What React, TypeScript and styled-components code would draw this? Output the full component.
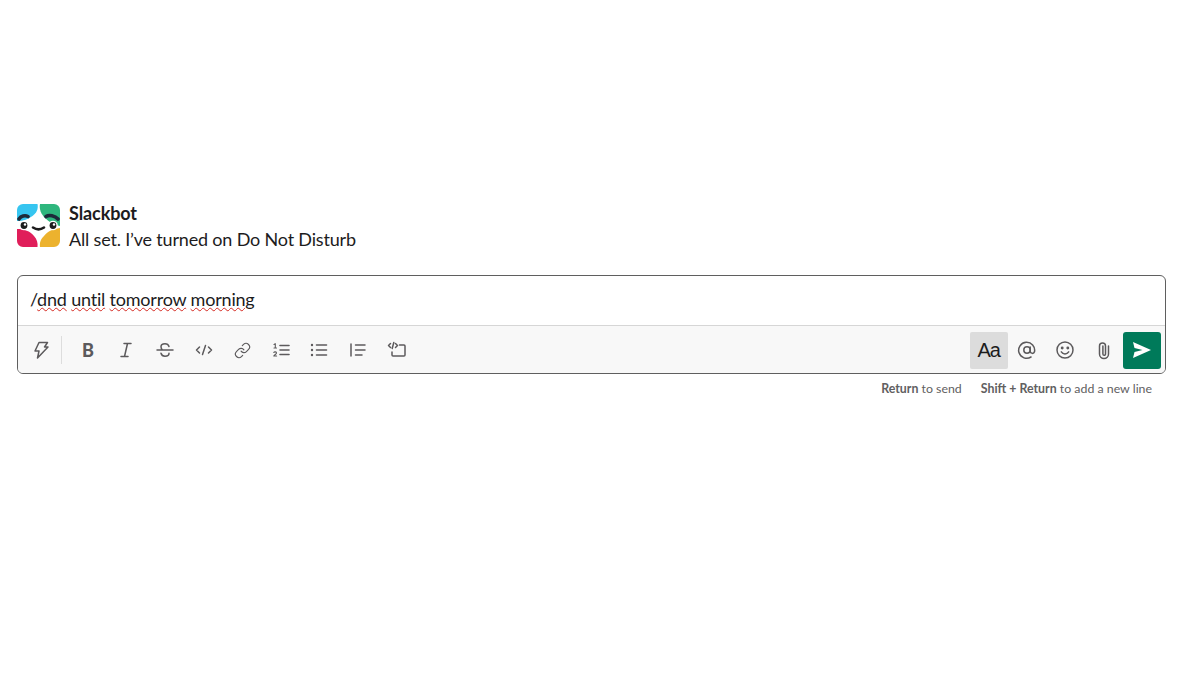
import styled, { createGlobalStyle } from 'styled-components'
import { Link } from 'lucide-react'

const GlobalStyle = createGlobalStyle`
  html, body {
    margin: 0;
    padding: 0;
    background: #fff;
    font-family: Lato, "Liberation Sans", sans-serif;
    color: #1d1c1d;
  }
`

const Page = styled.div`
  width: 1200px;
  height: 675px;
  box-sizing: border-box;
  padding: 204px 34px 0 17px;
  overflow: hidden;
`

const Message = styled.div`
  display: flex;
  gap: 9px;
  height: 71px;
`

const Avatar = styled.svg`
  width: 43px;
  height: 43px;
  flex: none;
`

const MessageBody = styled.div`
  display: flex;
  flex-direction: column;
`

const Sender = styled.div`
  font-size: 18px;
  line-height: 18px;
  font-weight: 700;
  letter-spacing: -0.1px;
`

const MessageText = styled.div`
  font-size: 18px;
  line-height: 24px;
  margin-top: 5px;
  letter-spacing: -0.18px;
`

const Composer = styled.div`
  border: 1px solid #5f5f5f;
  border-radius: 6px;
  overflow: hidden;
  height: 99px;
  box-sizing: border-box;
`

const InputRow = styled.div`
  height: 50px;
  box-sizing: border-box;
  padding: 11px 12px 0;
  font-size: 18px;
  line-height: 24px;
  border-bottom: 1px solid #d6d6d6;
  letter-spacing: -0.2px;
`

const Misspelled = styled.span`
  text-decoration: underline wavy #d42a22 1.3px;
  text-underline-offset: 1px;
`

const Toolbar = styled.div`
  height: 47px;
  background: #f8f8f8;
  display: flex;
  align-items: center;
  justify-content: space-between;
  padding: 1px 4px 0 4px;
  box-sizing: border-box;
`

const ToolGroup = styled.div`
  display: flex;
  align-items: center;
`

const Tool = styled.div<{ $active?: boolean }>`
  width: 38.6px;
  height: 37px;
  display: flex;
  align-items: center;
  justify-content: center;
  color: ${props => (props.$active ? '#1d1c1d' : '#5c5a5c')};
  background: ${props => (props.$active ? '#dcdcdc' : 'transparent')};
  border-radius: 2px;
`

const BoldTool = styled(Tool)`
  font-size: 18px;
  font-weight: 900;
`

const FontTool = styled(Tool)`
  width: 38px;
  margin-left: 1px;
  margin-right: -0.4px;
  font-family: "Liberation Sans", Arial, sans-serif;
  font-size: 20px;
  letter-spacing: -1px;
`

const ToolDivider = styled.div`
  width: 1px;
  height: 28px;
  background: #dddddd;
  margin: 0 7px 0 0;
`

const SendButton = styled.div`
  width: 38px;
  height: 37px;
  background: #007a5a;
  border-radius: 3px;
  display: flex;
  align-items: center;
  justify-content: center;
`

const Hints = styled.div`
  display: flex;
  justify-content: flex-end;
  gap: 19px;
  padding: 7px 14px 0 0;
  font-size: 12.35px;
  line-height: 16px;
  color: #616061;
`

const Hint = styled.span`
  b {
    font-weight: 700;
  }
`

const Icon = styled.svg`
  width: 20px;
  height: 20px;
  fill: none;
  stroke: currentColor;
  stroke-width: 1.5;
  stroke-linecap: round;
  stroke-linejoin: round;
`

function SlackbotLogo() {
  return (
    <Avatar viewBox="0 0 43 43">
      <path d="M0 17V6a6 6 0 0 1 6-6h14.500c1 5-1 9-5 12-4 3-9 5-15.500 5z" fill="#36c5f0" />
      <path d="M23 0h14a6 6 0 0 1 6 6v16c-6-1-11-4-15-8-4-4-6-9-5-14z" fill="#2eb67d" />
      <path d="M0 25c7 0 13 2 17 7 3 3 4 7 3.500 11H6a6 6 0 0 1-6-6z" fill="#e01e5a" />
      <path d="M43 24v13a6 6 0 0 1-6 6H23c-.5-4 .5-8 4-11 4-5 9-7 16-8z" fill="#ecb22e" />
      <path d="M2 15c2-3 6-4 9-2.500" stroke="#1d2a3a" strokeWidth="3.600" fill="none" strokeLinecap="round" />
      <path d="M29 12.500c3-2 9-1 12 2.500" stroke="#1d2a3a" strokeWidth="3.600" fill="none" strokeLinecap="round" />
      <circle cx="7" cy="21.500" r="4.800" fill="#fff" />
      <circle cx="36" cy="21.500" r="4.800" fill="#fff" />
      <circle cx="7" cy="21.500" r="3.400" fill="#1d1c1d" />
      <circle cx="36" cy="21.500" r="3.400" fill="#1d1c1d" />
      <circle cx="8" cy="20.500" r="1.200" fill="#fff" />
      <circle cx="37" cy="20.500" r="1.200" fill="#fff" />
      <path d="M16 23.500c3.500 2.400 7.500 2.400 11 0" stroke="#1d1c1d" strokeWidth="2.600" fill="none" strokeLinecap="round" />
    </Avatar>
  )
}

export default function App() {
  return (
    <Page>
      <GlobalStyle />
      <Message>
        <SlackbotLogo />
        <MessageBody>
          <Sender>Slackbot</Sender>
          <MessageText>All set. I’ve turned on Do Not Disturb</MessageText>
        </MessageBody>
      </Message>
      <Composer>
        <InputRow>
          /<Misspelled>dnd</Misspelled> <Misspelled>until</Misspelled>{' '}
          <Misspelled>tomorrow</Misspelled> <Misspelled>morning</Misspelled>
        </InputRow>
        <Toolbar>
          <ToolGroup>
            <Tool>
              <Icon viewBox="0 0 20 20">
                <path d="M8 2.500h8.500l-3 4.500h3.500L6.500 18l1.500-7H4z" />
              </Icon>
            </Tool>
            <ToolDivider />
            <BoldTool>B</BoldTool>
            <Tool>
              <Icon viewBox="0 0 20 20">
                <path d="M8 3.500h7M5 16.500h7M11.500 3.500l-3 13" />
              </Icon>
            </Tool>
            <Tool>
              <Icon viewBox="0 0 20 20">
                <path d="M2 10h16M14 6.500c-.5-1.800-2-2.800-4-2.800-2.300 0-4 1.200-4 3 0 1.300.7 2.500 1.500 3.300M6 13.300c.5 1.900 2 3 4 3 2.300 0 4-1.300 4-3" />
              </Icon>
            </Tool>
            <Tool>
              <Icon viewBox="0 0 20 20">
                <path d="M5.500 7 2.500 10l3 3M14.500 7l3 3-3 3M11.500 5.500l-3 9" />
              </Icon>
            </Tool>
            <Tool><Link size={17} strokeWidth={1.6} /></Tool>
            <Tool>
              <Icon viewBox="0 0 20 20">
                <path d="M9 5.500h9M9 10h9M9 14.500h9" strokeWidth="1.600" />
                <path d="M3 4.500l1.300-.8v4M3 8h2.500M2.800 12.500c.6-1 2.700-.8 2.700.5 0 1.300-2.700 2-2.700 3h2.800" strokeWidth="1.100" />
              </Icon>
            </Tool>
            <Tool>
              <Icon viewBox="0 0 20 20">
                <path d="M7.500 5h10M7.500 10h10M7.500 15h10" strokeWidth="1.600" />
                <circle cx="3" cy="5" r="1.200" fill="currentColor" stroke="none" />
                <circle cx="3" cy="10" r="1.200" fill="currentColor" stroke="none" />
                <circle cx="3" cy="15" r="1.200" fill="currentColor" stroke="none" />
              </Icon>
            </Tool>
            <Tool>
              <Icon viewBox="0 0 20 20">
                <path d="M3 4v12M7.500 5H17M7.500 10H17M7.500 15H14" />
              </Icon>
            </Tool>
            <Tool>
              <Icon viewBox="0 0 20 20">
                <path d="M3.500 3.500 1.500 5.500l2 2M8.500 3.500l2 2-2 2M6.800 2.500 5.200 8.500M12.500 5H17a1 1 0 0 1 1 1v9a1 1 0 0 1-1 1H6a1 1 0 0 1-1-1v-3" />
              </Icon>
            </Tool>
          </ToolGroup>
          <ToolGroup>
            <FontTool $active>Aa</FontTool>
            <Tool>
              <Icon viewBox="0 0 20 20" strokeWidth={1.300}>
                <circle cx="10" cy="10" r="3.200" />
                <path d="M13.200 7v4.400a2.200 2.200 0 0 0 4.300.4A8 8 0 1 0 14 17" />
              </Icon>
            </Tool>
            <Tool>
              <Icon viewBox="0 0 20 20">
                <circle cx="10" cy="10" r="8" />
                <path d="M6.300 11.800c1.800 2.800 5.600 2.800 7.400 0" />
                <circle cx="7.200" cy="8" r=".7" fill="currentColor" />
                <circle cx="12.800" cy="8" r=".7" fill="currentColor" />
              </Icon>
            </Tool>
            <Tool>
              <Icon viewBox="0 0 20 20">
                <path d="M14.500 6v8a4.500 4.500 0 0 1-9 0V6a3 3 0 0 1 6 0v8a1.300 1.300 0 0 1-2.600 0V6" />
              </Icon>
            </Tool>
            <SendButton>
              <svg width="18" height="16" viewBox="0 0 18 16">
                <path d="M0 0l18 8L0 16l1.500-6 8-2-8-2z" fill="#fff" />
              </svg>
            </SendButton>
          </ToolGroup>
        </Toolbar>
      </Composer>
      <Hints>
        <Hint><b>Return</b> to send</Hint>
        <Hint><b>Shift + Return</b> to add a new line</Hint>
      </Hints>
    </Page>
  )
}
